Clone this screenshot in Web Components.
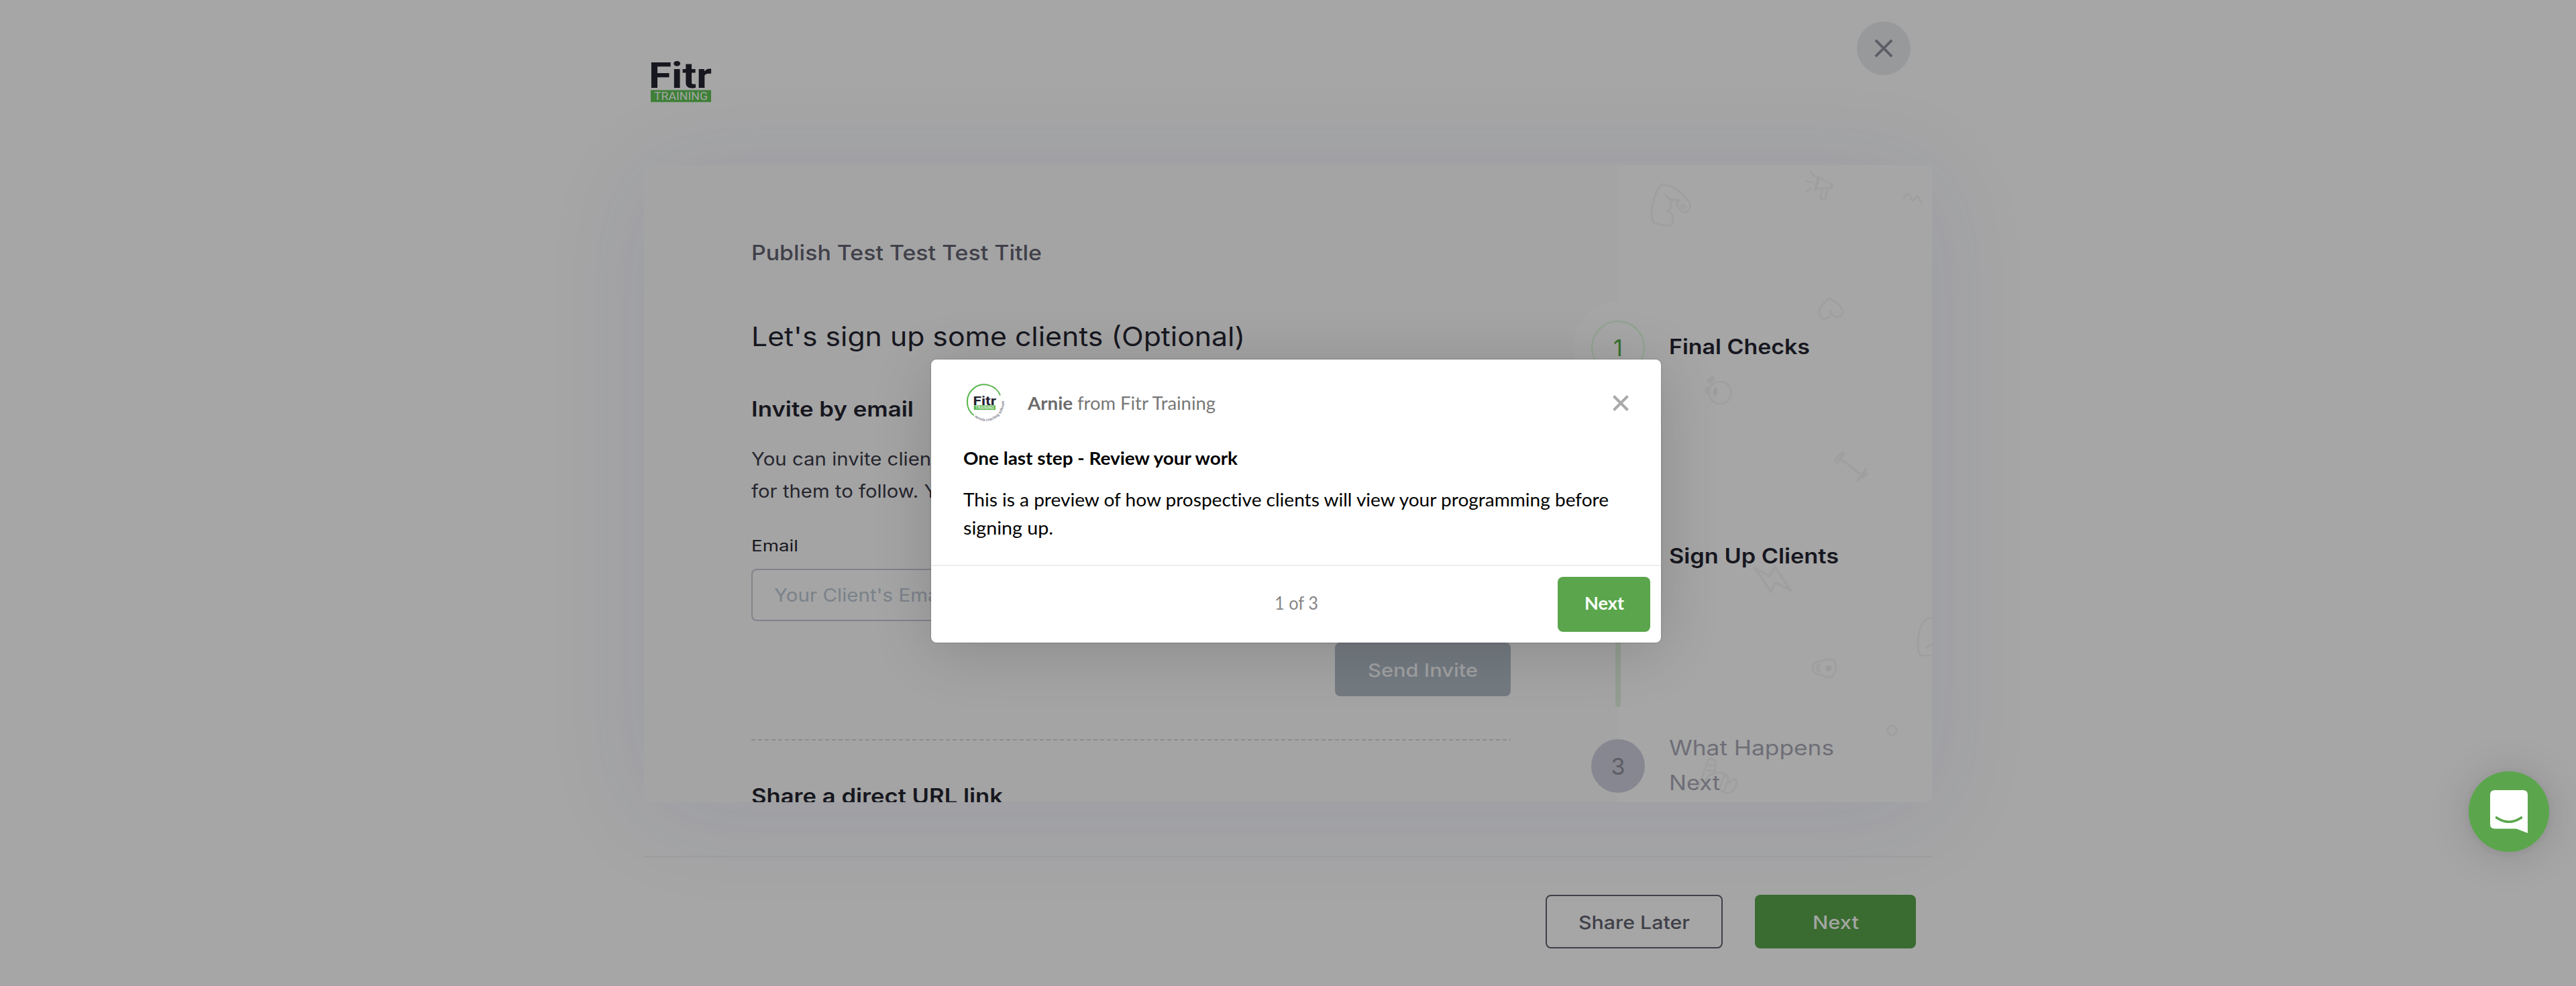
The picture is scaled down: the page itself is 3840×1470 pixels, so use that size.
<!DOCTYPE html>
<html lang="en">
<head>
<meta charset="utf-8">
<title>Publish - Fitr Training</title>
<style>
html,body{margin:0;padding:0}
body{width:3840px;height:1470px;overflow:hidden;background:#a6a6a6;font-family:Inter,"Liberation Sans",sans-serif;color:#17171f}
</style>
</head>
<body>
<publish-page></publish-page>
<tour-dialog>
  <fit-text slot="author" w="67" style="font-weight:700;color:#6b6b6b">Arnie</fit-text>
  <fit-text slot="author" w="206">from Fitr Training</fit-text>
  <fit-text slot="title" w="409">One last step - Review your work</fit-text>
  <fit-text slot="body" w="962">This is a preview of how prospective clients will view your programming before</fit-text>
  <fit-text slot="body" w="134">signing up.</fit-text>
  <fit-text slot="count" w="65">1 of 3</fit-text>
  <fit-text slot="action" w="59">Next</fit-text>
</tour-dialog>
<chat-launcher></chat-launcher>

<script>
const define = (name, html) => customElements.define(name, class extends HTMLElement {
  constructor() {
    super();
    this.attachShadow({mode: 'open'}).innerHTML = html;
  }
});

define('brand-logo', `
<style>:host{display:block;width:92px;height:64px}svg{display:block;overflow:visible}</style>
<svg width="92" height="64" viewBox="0 0 92 64" font-family="Roboto,sans-serif">
  <text x="-3" y="41" font-size="54" font-weight="700" fill="#17171f" textLength="94" lengthAdjust="spacingAndGlyphs">Fitr</text>
  <rect y="44.3" width="90" height="17.9" fill="#3f8038"/>
  <text x="5" y="59" font-size="16" fill="#a6a6a6" textLength="80" lengthAdjust="spacingAndGlyphs">TRAINING</text>
</svg>`);

define('close-button', `
<style>:host{display:flex;width:80px;height:80px;border-radius:50%;background:#98999b;align-items:center;justify-content:center}</style>
<svg width="32" height="32" viewBox="0 0 32 32"><path d="M4 4L28 28M28 4L4 28" stroke="#5c5d65" stroke-width="4.2" stroke-linecap="square" transform="translate(1.6 1.6) scale(.9)"/></svg>`);

define('action-button', `
<style>
:host{display:flex;box-sizing:border-box;height:80px;border-radius:8px;align-items:center;justify-content:center;font-size:27.500px;font-weight:500;line-height:40px;padding-top:1px}
:host([kind=primary]){background:#3a6b31;color:#a3a6a2;width:240px}
:host([kind=outline]){border:2px solid #3f4049;color:#3f4049;width:264px}
:host([kind=muted]){background:#737a81;color:#a0a1a2;width:262px}
</style><slot></slot>`);

define('text-field', `
<style>
:host{display:flex;box-sizing:border-box;height:78px;border:2px solid #83838d;border-radius:8px;align-items:center;padding:1px 0 0 32px;font-size:27px;line-height:40px;color:#7a828a;background:#a5a5a5}
</style><slot></slot>`);

define('invite-form', `
<style>
:host{display:flex;flex-direction:column;box-sizing:border-box;width:1452px;height:950px;padding:111px 160px 0;background:#a4a4a4;overflow:hidden}
:host>*{flex:none}
.title{font-size:31.500px;line-height:40px;font-weight:500;color:#40404a}
h1{margin:81px 0 0;font-size:39px;line-height:48px;font-weight:400}
h2{margin:64px 0 0;font-size:31px;line-height:40px;font-weight:600}
.copy{margin-top:31px;font-size:27px;line-height:48px;color:#26262f}
.label{margin-top:42px;font-size:23px;line-height:30px;font-weight:400}
text-field{margin-top:19px}
action-button{margin-top:32px;align-self:flex-end}
.rule{margin-top:64px;height:2px;background:repeating-linear-gradient(90deg,#8b8b94 0 6px,transparent 6px 10px)}
h2.share{margin-top:63px}
</style>
<div class="title"><fit-text w="433">Publish Test Test Test Title</fit-text></div>
<h1><fit-text w="736">Let's sign up some clients (Optional)</fit-text></h1>
<h2><fit-text w="242">Invite by email</fit-text></h2>
<div class="copy"><fit-text w="293">You can invite clients</fit-text><fit-text w="310">for them to follow. You</fit-text></div>
<div class="label"><fit-text w="70">Email</fit-text></div>
<text-field><fit-text w="260">Your Client's Email</fit-text></text-field>
<action-button kind="muted"><fit-text w="164">Send Invite</fit-text></action-button>
<div class="rule"></div>
<h2 class="share"><fit-text w="375">Share a direct URL link</fit-text></h2>`);

define('doodle-pattern', `
<style>:host{display:block;position:absolute;inset:0}svg{display:block}</style>
<svg width="468" height="950" viewBox="2412 246 468 950" fill="none" stroke="#9f9f9f" stroke-width="2.800" stroke-linecap="round" stroke-linejoin="round">
  <path d="M2476 276Q2480 273 2484 276C2498 279 2512 290 2519 304C2522 312 2513 320 2507 315C2499 309 2498 300 2504 299L2489 297L2483 291M2489 297C2493 306 2491 312 2485 316C2491 313 2496 325 2493 333Q2489 338 2482 336L2467 333Q2462 331 2462 318C2463 302 2467 286 2476 276M2511 308C2510 303 2504 306 2507 310Q2509 313 2513 308"/>
  <path d="M2699 256L2705 263M2693 270L2702 272M2693 286L2700 281M2710 263L2705 284C2712 280 2719 279 2728 281L2730 274C2722 272 2714 266 2710 263M2711 266L2708 282M2717 281L2714 294Q2716 298 2721 296L2724 281M2730 274Q2735 278 2728 281"/>
  <path d="M2838 296Q2841 288 2845 289C2848 290 2849 301 2852 299S2857 290 2860 294L2864 303"/>
  <path d="M2724 447Q2728 443 2732 448C2743 453 2750 463 2745 470C2740 474 2731 474 2729 464C2731 475 2718 478 2714 472C2708 462 2717 453 2724 447"/>
  <circle cx="2564" cy="585.500" r="16.700"/><path d="M2548 568L2553 564M2545 583L2545 580" stroke-width="7"/><ellipse cx="2557" cy="584" rx="3" ry="6.500" fill="#9b9b9b" stroke="none" transform="rotate(8 2557 584)"/>
  <path d="M2745 686Q2755 691 2762 698T2774 707M2735 687L2746 674M2738 691L2749 676M2772 713L2782 699M2769 716L2779 705M2777 712L2783 706" stroke-width="3.400"/>
  <path d="M2615.500 846.500L2638 859L2646 845L2669 880L2646 868.500L2640 882.500Z" stroke-width="3.400"/>
  <path d="M2884 923C2872 918 2866 926 2861 941C2858 958 2859 970 2862 976Q2864 978 2884 977M2872 966Q2877 960 2884 961"/>
  <path d="M2702 995Q2702 987 2712 986C2719 986 2721 982 2729 983Q2737 984 2737 994T2729 1010C2721 1011 2719 1006 2712 1006Q2702 1005 2702 995"/><circle cx="2726" cy="996.500" r="4.500" fill="#9b9b9b" stroke="none"/><path d="M2711 991Q2708 996 2711 1001" stroke-width="5"/>
  <circle cx="2820.500" cy="1089" r="6.800"/>
  <path d="M2530 1176C2536 1160 2543 1145 2546 1134Q2552 1127 2557 1136C2557 1147 2557 1150 2556 1153Q2576 1147 2577 1167Q2588 1156 2589 1168C2585 1183 2574 1186 2563 1177M2547 1141L2556 1141M2545 1149L2556 1149M2571 1154L2563 1176M2577 1160L2570 1180M2545 1170Q2539 1156 2556 1153"/>
</svg>`);

define('step-item', `
<style>
:host{display:flex;height:312px;gap:36px;position:relative}
.rail{display:flex;flex-direction:column;align-items:center;gap:48px;width:80px}
.dot{flex:none;display:flex;box-sizing:border-box;width:80px;height:80px;border-radius:50%;align-items:center;justify-content:center;font-size:34px;font-weight:400;background:#868790;color:#5c5d64}
:host([done]) .dot{background:#a5a6a5;border:2px solid #90a38f;color:#37702f;box-shadow:0 0 0 28px #a6a6a6}
.line{display:none;width:8px;height:136px;border-radius:4px;background:#929e92}
:host([done]) .line{display:block}
.label{height:78px;padding-bottom:2px;display:flex;flex-direction:column;justify-content:center;font-size:31px;line-height:52px;font-weight:400;color:#6e6e77}
:host([done]) .label{font-weight:600;color:#17171f}
</style>
<div class="rail"><div class="dot"><slot name="n"></slot></div><div class="line"></div></div>
<div class="label"><slot></slot></div>`);

define('step-list', `
<style>
:host{display:block;position:relative;box-sizing:border-box;width:468px;height:950px;padding-top:232px;background:#a6a6a6;border-radius:0 8px 8px 0}
.steps{display:flex;flex-direction:column;margin-left:-40px}
</style>
<doodle-pattern></doodle-pattern>
<div class="steps">
  <step-item done><span slot="n">1</span><fit-text w="210">Final Checks</fit-text></step-item>
  <step-item done><fit-text w="253">Sign Up Clients</fit-text></step-item>
  <step-item><span slot="n">3</span><fit-text w="246">What Happens</fit-text><fit-text w="76">Next</fit-text></step-item>
</div>`);

define('publish-page', `
<style>
:host{display:block;width:1920px;height:1470px;margin:0 auto}
header{display:flex;justify-content:space-between;align-items:flex-start;box-sizing:border-box;height:246px;padding:32px 32px 0 10px;position:relative;z-index:1}
brand-logo{margin-top:58px}
.card{display:flex;height:950px;border-radius:8px;box-shadow:0 16px 160px rgba(40,56,150,.09)}
.clip{display:flex;height:950px;overflow:clip;border-radius:8px}
footer{display:flex;justify-content:flex-end;gap:48px;margin-top:80px;padding:56px 24px 0 0;border-top:2px solid #9b9c9c;position:relative}
</style>
<header><brand-logo></brand-logo><close-button></close-button></header>
<div class="card"><div class="clip"><invite-form></invite-form><step-list></step-list></div></div>
<footer>
  <action-button kind="outline"><fit-text w="166">Share Later</fit-text></action-button>
  <action-button kind="primary"><fit-text w="69">Next</fit-text></action-button>
</footer>`);

define('author-badge', `
<style>:host{display:block;width:64px;height:64px}svg{display:block;overflow:visible}</style>
<svg width="64" height="64" viewBox="0 0 64 64" font-family="Roboto,sans-serif">
  <path d="M15.800 50.200A25.500 25.500 0 1 1 55 20.500" fill="none" stroke="#5bb550" stroke-width="2"/>
  <text x="14.500" y="34.500" font-size="19" font-weight="700" fill="#23232f" textLength="34.500" lengthAdjust="spacingAndGlyphs">Fitr</text>
  <rect x="15.800" y="35.300" width="32.200" height="6.800" fill="#5bb550"/>
  <text x="18" y="41" font-size="6.500" fill="#fff" textLength="28" lengthAdjust="spacingAndGlyphs">TRAINING</text>
  <path id="ring" d="M16.500 52.500A27 27 0 0 0 59.300 23" fill="none"/>
  <text font-size="5.600" fill="#55555f"><textPath href="#ring" textLength="64">remote coaching software</textPath></text>
</svg>`);

define('tour-dialog', `
<style>
:host{display:flex;flex-direction:column;position:absolute;left:1388px;top:536px;width:1088px;height:422px;border-radius:8px;background:#fff;box-shadow:0 0 2px 1px rgba(0,0,0,.12),0 12px 90px rgba(0,0,0,.16);font-family:Lato,"Liberation Sans",sans-serif;font-size:26px;line-height:42px;color:#000;font-variant-ligatures:none}
header{display:flex;align-items:center;box-sizing:border-box;height:126px;padding:3px 48px 0}
.who{display:flex;gap:7px;margin-left:32px;color:#777;flex:1}
.title{padding:0 48px;font-weight:700}
.body{padding:0 48px;margin-top:20px;height:84px}
footer{display:grid;grid-template-columns:1fr auto 1fr;align-items:center;margin-top:34px;height:114px;border-top:2px solid #eee;padding:0 16px}
.count{grid-column:2;color:#868686;padding-bottom:4px}
.next{justify-self:end;display:flex;box-sizing:border-box;width:138px;height:82px;border-radius:8px;background:#5ba64c;color:#fff;font-weight:700;align-items:center;justify-content:center;padding-bottom:4px}
</style>
<header><author-badge></author-badge><div class="who"><slot name="author"></slot></div>
<svg width="24" height="24" viewBox="0 0 24 24"><path d="M1.500 1.500L22.500 22.500M22.500 1.500L1.500 22.500" stroke="#aaa" stroke-width="4"/></svg></header>
<div class="title"><slot name="title"></slot></div>
<div class="body"><slot name="body"></slot></div>
<footer><div class="count"><slot name="count"></slot></div><div class="next"><slot name="action"></slot></div></footer>`);

define('chat-launcher', `
<style>
:host{display:block;position:absolute;left:3680px;top:1150px;width:120px;height:120px;border-radius:50%;background:#5ba64c;box-shadow:0 2px 12px rgba(0,0,0,.06),0 4px 64px rgba(0,0,0,.15)}
svg{display:block}
</style>
<svg width="120" height="120" viewBox="0 0 120 120"><path d="M39 28H81Q88 28 88 35V92L71 85.500H39Q32 85.500 32 78.500V35Q32 28 39 28Z" fill="#fff"/><path d="M41.500 69Q60 81.500 78.500 69" fill="none" stroke="#5ba64c" stroke-width="3.600" stroke-linecap="round"/></svg>`);

/* One line of text, scaled horizontally to the width given in its w attribute. */
customElements.define('fit-text', class extends HTMLElement {
  constructor() {
    super();
    this.attachShadow({mode: 'open'}).innerHTML =
      '<style>:host{display:block;white-space:nowrap}span{display:inline-block;transform-origin:0 50%}</style><span><slot></slot></span>';
  }
  connectedCallback() {
    const span = this.shadowRoot.querySelector('span');
    const w = +this.getAttribute('w');
    this.style.width = w + 'px';
    span.style.transform = 'scaleX(' + w / span.getBoundingClientRect().width + ')';
  }
});
</script>
</body>
</html>
